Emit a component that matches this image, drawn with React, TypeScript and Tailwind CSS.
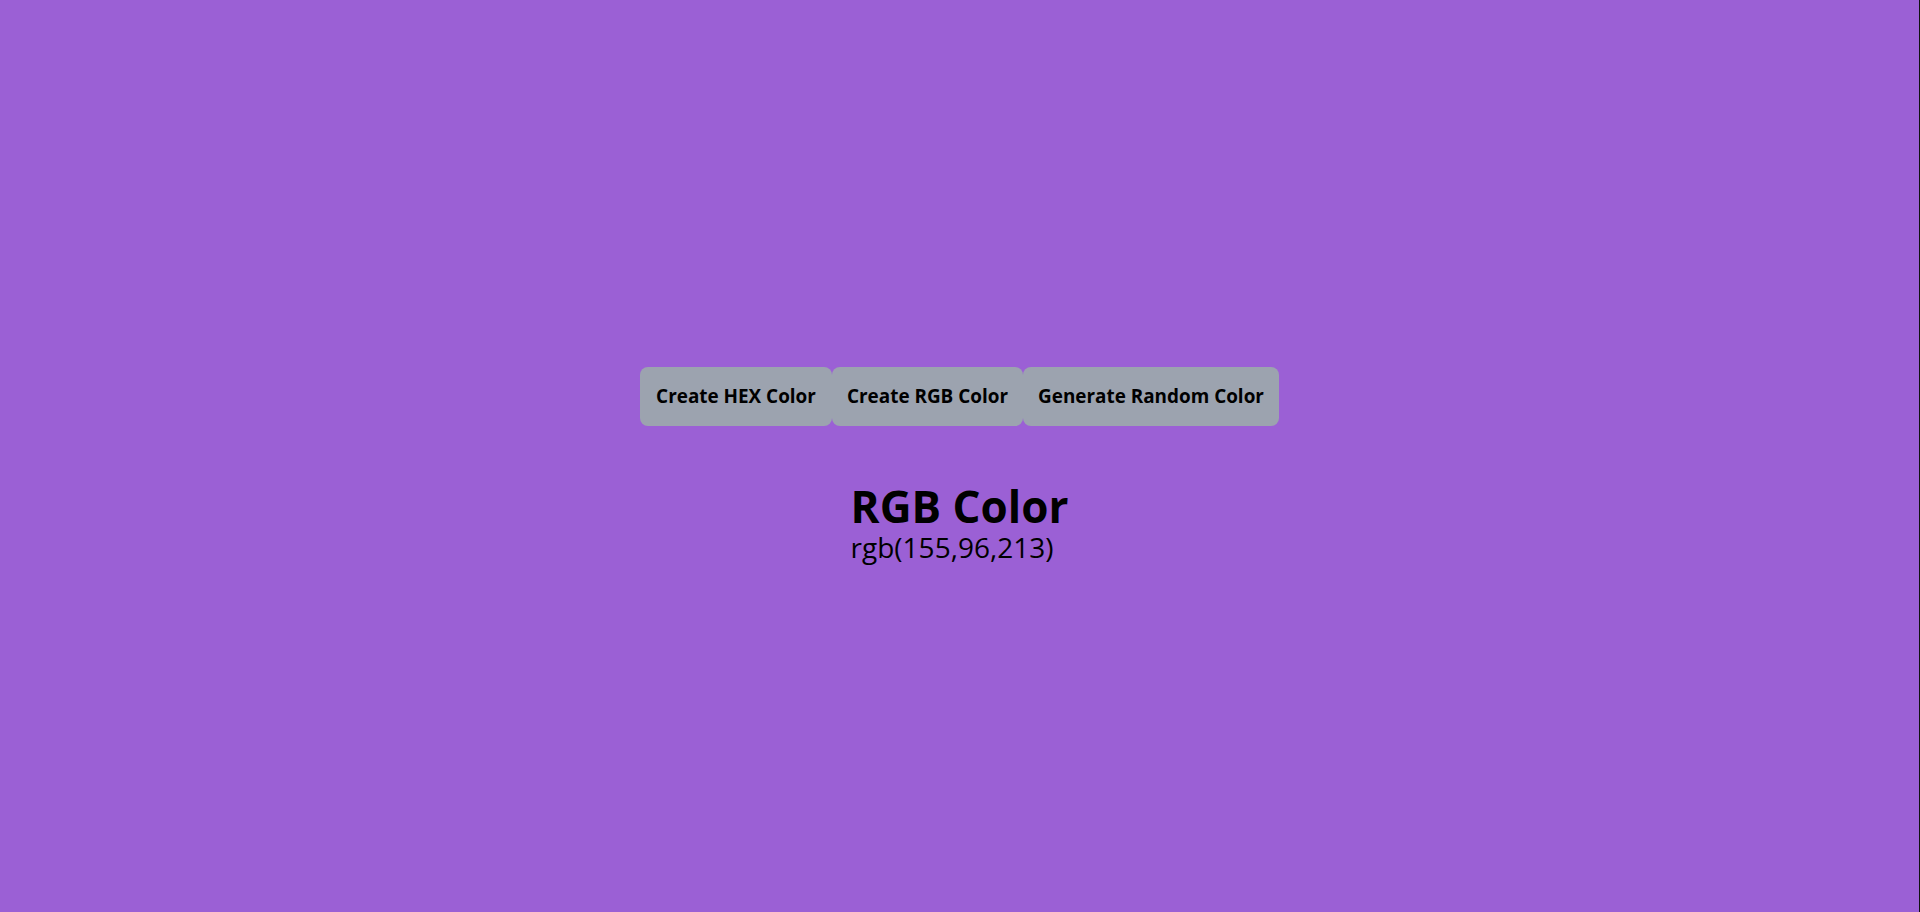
import React from "react";

export default function App() {
  const btn =
    "h-[59px] rounded-[8px] bg-[#9ca3af] text-black font-bold text-[18.9px] flex items-center justify-center whitespace-nowrap";
  return (
    <div
      className="min-h-screen w-full bg-[#9b60d5] border-r border-[#111111] flex flex-col items-center pt-[367px]"
      style={{ fontFamily: '"Open Sans", "Noto Sans", sans-serif' }}
    >
      <div className="flex">
        <button className={`${btn} w-[192px]`}>Create HEX Color</button>
        <button className={`${btn} w-[191px]`}>Create RGB Color</button>
        <button className={`${btn} w-[256px]`}>Generate Random Color</button>
      </div>
      <div className="mt-[56px] flex flex-col items-start text-black">
        <h1 className="text-[44px] font-bold leading-[48px]">RGB Color</h1>
        <p className="text-[28px] leading-[34px]">rgb(155,96,213)</p>
      </div>
    </div>
  );
}
